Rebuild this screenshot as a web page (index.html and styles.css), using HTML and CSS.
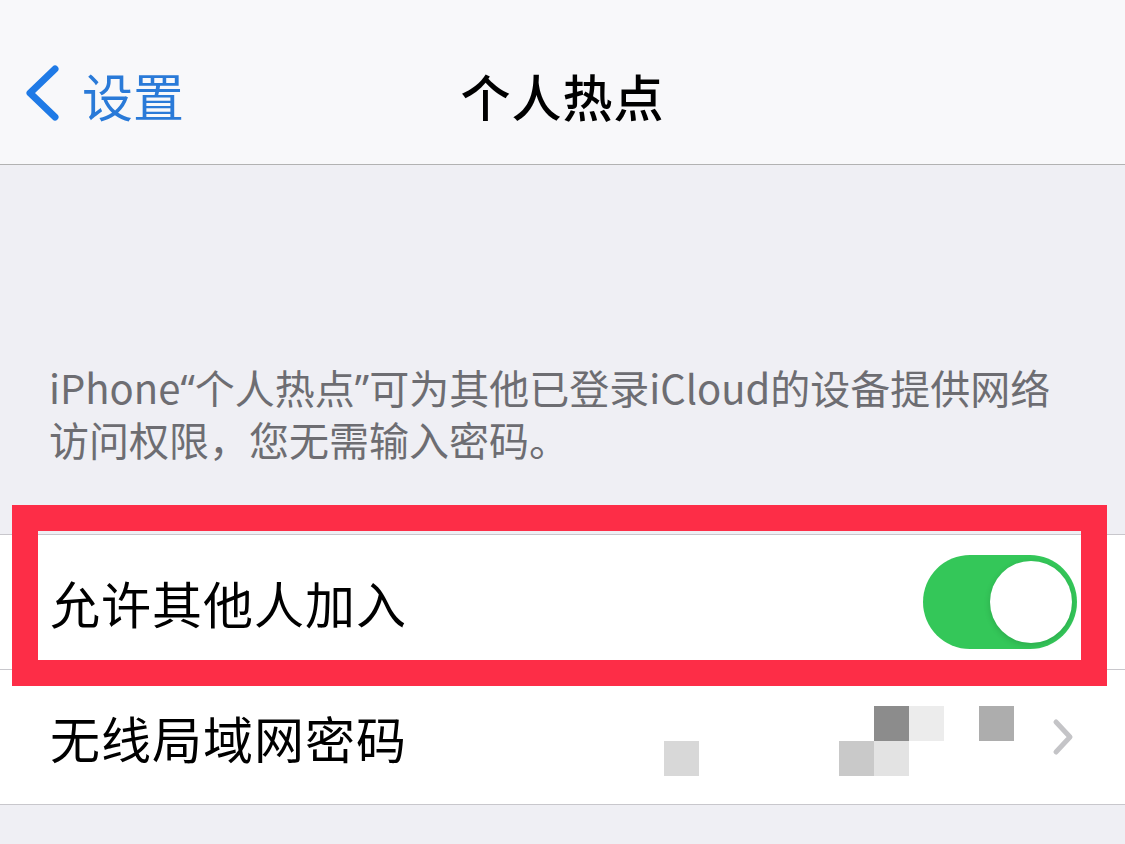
FILE: index.html
```html
<!DOCTYPE html>
<html lang="zh-CN">
<head>
    <meta charset="UTF-8">
    <meta name="viewport" content="width=device-width, initial-scale=1.0">
    <title>个人热点</title>
    <link rel="stylesheet" href="styles.css">
</head>
<body>
    <header class="nav-bar">
        <a class="back-link" href="#">
            <svg class="back-chevron" width="40" height="60" viewBox="0 0 40 60">
                <polyline points="31,4 6,28 31,52" />
            </svg>
            <span>设置</span>
        </a>
        <h1 class="nav-title">个人热点</h1>
        <div class="nav-spacer"></div>
    </header>

    <main class="content">
        <p class="group-footer">iPhone<span class="q">“</span>个人热点<span class="q">”</span>可为其他已登录iCloud的设备提供网络访问权限，您无需输入密码。</p>

        <ul class="cell-group">
            <li class="cell">
                <span class="cell-label">允许其他人加入</span>
                <span class="switch is-on"><span class="switch-knob"></span></span>
            </li>
            <li class="cell">
                <span class="cell-label">无线局域网密码</span>
                <span class="password-mask">
                    <i class="px c1 r2 tone-a"></i>
                    <i class="px c6 r2 tone-b"></i>
                    <i class="px c7 r2 tone-c"></i>
                    <i class="px c7 r1 tone-d"></i>
                    <i class="px c8 r1 tone-e"></i>
                    <i class="px c10 r1 tone-f"></i>
                </span>
                <svg class="disclosure" width="24" height="38" viewBox="0 0 24 38">
                    <polyline points="5,4 19,19 5,34" />
                </svg>
            </li>
        </ul>
    </main>

    <!-- annotation drawn over the first row -->
    <div class="highlight-box"></div>
</body>
</html>
```

FILE: styles.css
```css
body {
    margin: 0;
    padding: 0;
    background-color: #efeff4;
    font-family: "Noto Sans CJK SC", "Noto Sans", sans-serif;
    color: #000;
    width: 1125px;
    height: 844px;
    overflow: hidden;
    position: relative;
}

.nav-bar {
    height: 165px;
    box-sizing: border-box;
    padding-top: 26px;
    background-color: #f8f8fa;
    border-bottom: 1px solid #b2b2b2;
    display: grid;
    grid-template-columns: 1fr auto 1fr;
    align-items: center;
}

.back-link {
    display: flex;
    align-items: center;
    gap: 18px;
    padding-left: 24px;
    color: #2a7ad8;
    text-decoration: none;
    font-size: 51px;
}

.back-chevron polyline {
    fill: none;
    stroke: #1f7ae6;
    stroke-width: 7;
    stroke-linecap: round;
    stroke-linejoin: round;
}

.nav-title {
    margin: 0;
    font-size: 50px;
    font-weight: 500;
    letter-spacing: 1px;
}

.content {
    padding-top: 197px;
}

.group-footer {
    margin: 0 0 70px 0;
    padding: 0 40px 0 49px;
    font-size: 40px;
    line-height: 50px;
    color: #6d6d72;
}

/* narrow curly quotes, like the system font */
.group-footer .q {
    font-family: "Noto Sans", sans-serif;
}

.cell-group {
    list-style: none;
    margin: 0;
    padding: 0;
    background: white;
    border-top: 1px solid #c8c7cc;
    border-bottom: 1px solid #c8c7cc;
}

.cell {
    height: 134px;
    display: flex;
    align-items: center;
    padding: 0 48px 0 50px;
}

.cell + .cell {
    border-top: 1px solid #c8c7cc;
}

.cell-label {
    font-size: 50px;
    letter-spacing: 1px;
}

.switch {
    margin-left: auto;
    width: 154px;
    height: 94px;
    border-radius: 47px;
    background-color: #34c759;
    display: flex;
    align-items: center;
    justify-content: flex-end;
    padding: 0 5px;
    box-sizing: border-box;
}

.switch-knob {
    width: 82px;
    height: 82px;
    border-radius: 50%;
    background: white;
    box-shadow: 0 2px 6px rgba(0, 0, 0, 0.15);
}

.password-mask {
    margin-left: auto;
    display: grid;
    grid-template-columns: repeat(12, 35px);
    grid-template-rows: repeat(2, 35px);
    margin-top: 8px;
}

.px.c1 { grid-column: 2; }
.px.c6 { grid-column: 7; }
.px.c7 { grid-column: 8; }
.px.c8 { grid-column: 9; }
.px.c10 { grid-column: 11; }
.px.r1 { grid-row: 1; }
.px.r2 { grid-row: 2; }

.tone-a { background: #d8d8d8; }
.tone-b { background: #c9c9c9; }
.tone-c { background: #e3e3e3; }
.tone-d { background: #8c8c8c; }
.tone-e { background: #ececec; }
.tone-f { background: #adadad; }

.disclosure {
    margin-left: 2px;
    margin-right: 2px;
}

.disclosure polyline {
    fill: none;
    stroke: #c4c4c7;
    stroke-width: 5;
    stroke-linecap: round;
    stroke-linejoin: round;
}

.highlight-box {
    position: absolute;
    left: 12px;
    top: 505px;
    width: 1095px;
    height: 181px;
    border: 26px solid #fd2d47;
    box-sizing: border-box;
    pointer-events: none;
}
```
